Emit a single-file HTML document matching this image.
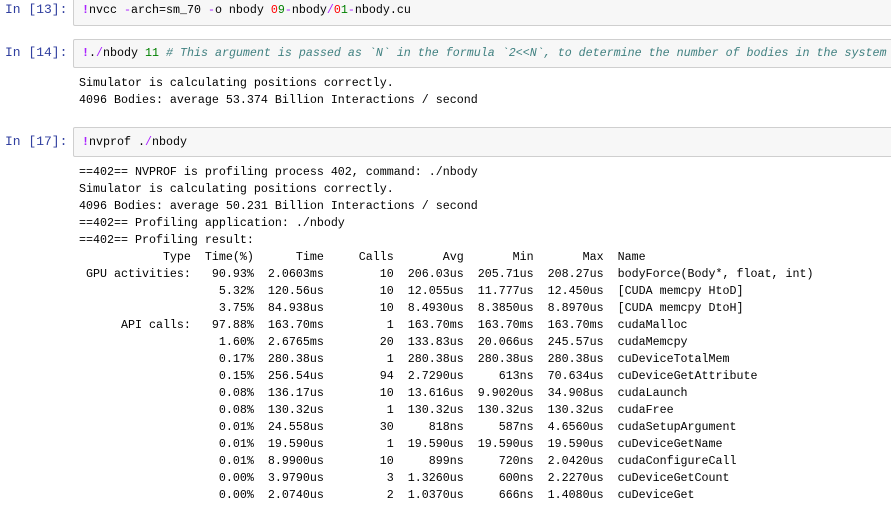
<!DOCTYPE html>
<html><head><style>
body{margin:0;width:891px;height:506px;overflow:hidden;background:#fff;font-family:"Liberation Mono","Noto Sans CJK SC",monospace;font-size:11.67px;color:#000}
.p{position:absolute;left:5px;color:#303F9F;white-space:pre;font-size:13px}
.box{position:absolute;left:73px;right:-2px;background:#f7f7f7;border:1px solid #cfcfcf;border-radius:2px}
.t{position:absolute;left:8px;white-space:pre}
pre{position:absolute;left:79px;margin:0;font:inherit;line-height:17px;white-space:pre}
.k{color:#AA22FF;font-weight:bold}.o{color:#AA22FF}.r{color:#f00}.g{color:#008000}.c{color:#408080;font-style:italic}
</style></head><body>
<div class="p" style="top:2px">In [13]:</div>
<div class="box" style="top:-2px;height:26px"><div class="t" style="top:4px"><span class="k">!</span>nvcc <span class="o">-</span>arch=sm_70 <span class="o">-</span>o nbody <span class="r">0</span><span class="g">9</span><span class="o">-</span>nbody<span class="o">/</span><span class="r">0</span><span class="g">1</span><span class="o">-</span>nbody.cu</div></div>
<div class="p" style="top:45px">In [14]:</div>
<div class="box" style="top:39px;height:27px"><div class="t" style="top:6px"><span class="k">!</span>.<span class="o">/</span>nbody <span class="g">11</span> <span class="c"># This argument is passed as `N` in the formula `2&lt;&lt;N`, to determine the number of bodies in the system</span></div></div>
<pre style="top:75px">Simulator is calculating positions correctly.
4096 Bodies: average 53.374 Billion Interactions / second</pre>
<div class="p" style="top:134px">In [17]:</div>
<div class="box" style="top:127px;height:28px"><div class="t" style="top:7px"><span class="k">!</span>nvprof .<span class="o">/</span>nbody</div></div>
<pre style="top:164px">==402== NVPROF is profiling process 402, command: ./nbody
Simulator is calculating positions correctly.
4096 Bodies: average 50.231 Billion Interactions / second
==402== Profiling application: ./nbody
==402== Profiling result:
            Type  Time(%)      Time     Calls       Avg       Min       Max  Name
 GPU activities:   90.93%  2.0603ms        10  206.03us  205.71us  208.27us  bodyForce(Body*, float, int)
                    5.32%  120.56us        10  12.055us  11.777us  12.450us  [CUDA memcpy HtoD]
                    3.75%  84.938us        10  8.4930us  8.3850us  8.8970us  [CUDA memcpy DtoH]
      API calls:   97.88%  163.70ms         1  163.70ms  163.70ms  163.70ms  cudaMalloc
                    1.60%  2.6765ms        20  133.83us  20.066us  245.57us  cudaMemcpy
                    0.17%  280.38us         1  280.38us  280.38us  280.38us  cuDeviceTotalMem
                    0.15%  256.54us        94  2.7290us     613ns  70.634us  cuDeviceGetAttribute
                    0.08%  136.17us        10  13.616us  9.9020us  34.908us  cudaLaunch
                    0.08%  130.32us         1  130.32us  130.32us  130.32us  cudaFree
                    0.01%  24.558us        30     818ns     587ns  4.6560us  cudaSetupArgument
                    0.01%  19.590us         1  19.590us  19.590us  19.590us  cuDeviceGetName
                    0.01%  8.9900us        10     899ns     720ns  2.0420us  cudaConfigureCall
                    0.00%  3.9790us         3  1.3260us     600ns  2.2270us  cuDeviceGetCount
                    0.00%  2.0740us         2  1.0370us     666ns  1.4080us  cuDeviceGet</pre>
</body></html>
